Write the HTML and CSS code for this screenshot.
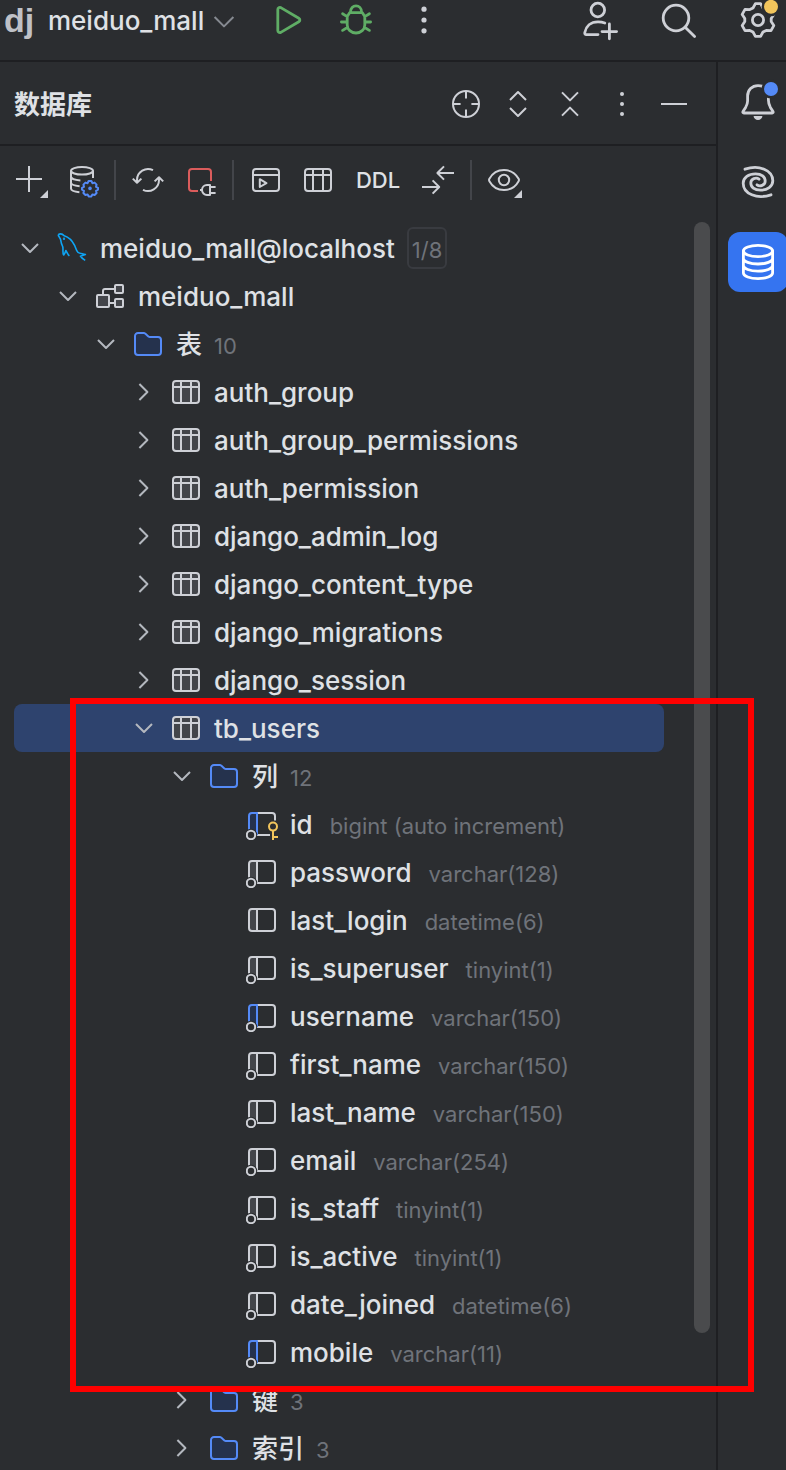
FILE: index.html
```html
<!DOCTYPE html>
<html lang="zh-CN">
<head>
    <meta charset="UTF-8">
    <meta name="viewport" content="width=device-width, initial-scale=1.0">
    <title>meiduo_mall</title>
    <link rel="stylesheet" href="styles.css">
</head>
<body>
    <!-- shared icons -->
    <svg class="sprite" aria-hidden="true">
        <symbol id="i-down" viewBox="0 0 16 16"><path d="M4 6l4 4 4-4"/></symbol>
        <symbol id="i-right" viewBox="0 0 16 16"><path d="M5.700 4l4 4-4 4"/></symbol>
        <symbol id="i-folder" viewBox="0 0 16 16">
            <path fill="#25324d" stroke="#548af7" d="M1.5 4A1.5 1.5 0 0 1 3 2.5h2.9a1 1 0 0 1 .7.3l1.6 1.4a1 1 0 0 0 .7.3H13A1.5 1.5 0 0 1 14.500 6v6a1.500 1.500 0 0 1-1.500 1.500H3A1.500 1.500 0 0 1 1.500 12z"/>
        </symbol>
        <symbol id="i-table" viewBox="0 0 16 16">
            <rect x="1.5" y="2.5" width="13" height="11" rx="1.5"/>
            <path d="M1.5 5.500h13M5.500 2.500v11M10.500 2.500v11"/>
        </symbol>
        <symbol id="i-schema" viewBox="0 0 16 16">
            <path d="M4.500 7.500V5.500a1 1 0 0 1 1-1h5M7.500 11.500h3"/>
            <rect x="1.5" y="7.500" width="6" height="6" rx=".5" fill="#43454a"/>
            <rect x="10.500" y="2.500" width="4" height="4" rx=".5" fill="#43454a"/>
            <rect x="10.500" y="9.500" width="4" height="4" rx=".5" fill="#43454a"/>
        </symbol>
        <symbol id="i-col" viewBox="0 0 16 16">
            <path fill="#43454a" stroke="none" d="M3 2.500h2.500v11H3A1.500 1.500 0 0 1 1.500 12V4z"/>
            <rect x="1.5" y="2.5" width="13" height="11" rx="1.5"/>
            <path d="M5.500 2.500v11"/>
        </symbol>
        <symbol id="i-col-nn" viewBox="0 0 16 16">
            <path fill="#43454a" stroke="none" d="M3 2.500h2.500v11H3A1.500 1.500 0 0 1 1.500 12V4z"/>
            <rect x="1.5" y="2.5" width="13" height="11" rx="1.5"/>
            <path d="M5.500 2.500v11"/>
            <circle cx="2.500" cy="13.500" r="3.100" fill="#2b2d30" stroke="none"/>
            <circle cx="2.500" cy="13.500" r="2.100"/>
        </symbol>
        <symbol id="i-col-idx" viewBox="0 0 16 16">
            <path d="M5.500 2.500H13A1.500 1.500 0 0 1 14.500 4v8a1.500 1.500 0 0 1-1.500 1.500H5.500"/>
            <path fill="#25324d" stroke="#548af7" d="M5.500 13.500v-11H3A1.500 1.500 0 0 0 1.500 4v8"/>
            <circle cx="2.500" cy="13.500" r="3.100" fill="#2b2d30" stroke="none"/>
            <circle cx="2.500" cy="13.500" r="2.100"/>
        </symbol>
        <symbol id="i-col-pk" viewBox="0 0 16 16">
            <path d="M5.500 2.500H13A1.500 1.500 0 0 1 14.500 4v2.300M5.500 13.500H12"/>
            <path fill="#25324d" stroke="#548af7" d="M5.500 13.500v-11H3A1.500 1.500 0 0 0 1.500 4v8"/>
            <circle cx="2.500" cy="13.500" r="3.100" fill="#2b2d30" stroke="none"/>
            <circle cx="2.500" cy="13.500" r="2.100"/>
            <g stroke="#f2c55c"><circle cx="13.500" cy="9.300" r="2"/><path d="M13.500 11.300V16M13.500 14.500H16"/></g>
        </symbol>
    </svg>

    <div class="app">
        <header class="topbar">
            <span class="logo">dj</span>
            <button class="project">
                meiduo_mall
                <svg class="icon muted" viewBox="0 0 16 16"><path d="M3.300 6l4.700 4.700L12.700 6"/></svg>
            </button>
            <div class="run-tools">
                <button aria-label="Run">
                    <svg class="icon-lg green" viewBox="0 0 20 20"><path d="M4.900 4.700v10.600c0 .8.800 1.200 1.500.9l9-5.300c.7-.4.7-1.400 0-1.800l-9-5.300c-.7-.3-1.500.1-1.500.9z"/></svg>
                </button>
                <button aria-label="Debug">
                    <svg class="icon-lg green" viewBox="0 0 20 20"><path d="M6.900 6.300h6.200l1.300 2v4.200a4.400 4 0 0 1-8.800 0V8.300zM7.200 6.200C7.200 1.900 12.800 1.900 12.800 6.200M5.600 8.300L3.300 6.900M14.400 8.300l2.300-1.400M5.600 11H2.700M14.400 11h2.900M5.900 13.600l-2.600 1.600M14.100 13.600l2.600 1.600"/></svg>
                </button>
                <button aria-label="More">
                    <svg class="icon-lg solid" viewBox="0 0 20 20"><circle cx="10" cy="4.600" r="1.300"/><circle cx="10" cy="10" r="1.300"/><circle cx="10" cy="15.400" r="1.300"/></svg>
                </button>
            </div>
            <div class="user-tools">
                <button aria-label="Add user">
                    <svg class="icon-lg" viewBox="0 0 20 20"><circle cx="9.900" cy="5" r="3.400"/><path d="M13.400 11.500c-1-.4-2.200-.6-3.400-.6-3.700 0-6 2.300-6.600 5.300-.1.700.1 1.100.8 1.100H10M15.700 12v7.400M12 15.800h7.300"/></svg>
                </button>
                <button aria-label="Search">
                    <svg class="icon-lg" viewBox="0 0 20 20"><circle cx="9" cy="9" r="6.400"/><path d="M13.600 13.600l4.700 4.700"/></svg>
                </button>
                <button aria-label="Settings">
                    <svg class="icon-lg" viewBox="0 0 20 20">
                        <path d="M8.700 1.800h2.600l1.200 2.200 1.600.8 2.400-.1 1.400 2.500-1.300 2v1.600l1.300 2-1.400 2.500-2.400-.1-1.600.8-1.200 2.200H8.700L7.500 16l-1.600-.8-2.400.1-1.400-2.500 1.300-2V9.200l-1.300-2 1.400-2.500 2.400.1L7.500 4z"/>
                        <circle cx="10" cy="10" r="2.800"/>
                        <circle cx="16.500" cy="3.400" r="4.700" fill="#2b2d30" stroke="none"/>
                        <circle cx="16.500" cy="3.400" r="3.500" fill="#f2c55c" stroke="none"/>
                    </svg>
                </button>
            </div>
        </header>

        <div class="workspace">
            <main class="panel">
                <div class="panel-header">
                    <h1>数据库</h1>
                    <div class="panel-actions">
                        <button aria-label="Locate"><svg class="icon" viewBox="0 0 16 16"><circle cx="8" cy="8" r="6.500"/><path d="M8 1.500V5.300M8 10.700v3.800M1.500 8h3.800M10.700 8h3.800"/></svg></button>
                        <button aria-label="Expand all"><svg class="icon" viewBox="0 0 16 16"><path d="M4 6l4-4 4 4M4 10l4 4 4-4"/></svg></button>
                        <button aria-label="Collapse all"><svg class="icon" viewBox="0 0 16 16"><path d="M4 2.200l4 4 4-4M4 13.800l4-4 4 4"/></svg></button>
                        <button aria-label="Options"><svg class="icon solid" viewBox="0 0 16 16"><circle cx="8" cy="3" r="1"/><circle cx="8" cy="8" r="1"/><circle cx="8" cy="13" r="1"/></svg></button>
                        <button aria-label="Hide"><svg class="icon" viewBox="0 0 16 16"><path d="M1.500 8h13"/></svg></button>
                    </div>
                </div>

                <div class="toolbar">
                    <div class="tool-group">
                        <button aria-label="New"><svg class="icon" viewBox="0 0 16 16"><path d="M7.500 1v13M1 7.500h13"/><path class="corner" d="M17 13v4h-4z"/></svg></button>
                        <button aria-label="Data source properties"><svg class="icon" viewBox="0 0 16 16">
                            <ellipse cx="8" cy="3.400" rx="5.500" ry="1.900"/>
                            <path d="M13.500 3.400V7M2.500 3.400v8.900c0 .9 1.800 1.600 4.200 1.800M2.500 6.300c0 1 1.900 1.800 4.700 1.900M2.500 9.300c0 .9 1.700 1.600 4.300 1.800"/>
                            <path stroke="#548af7" d="M11.300 8.500h1.400l.5 1.100 1.100-.3 1 1-.3 1.100 1 .5v.9l-1 .6.300 1.100-1 1-1.100-.3-.5 1h-1.400l-.5-1-1.100.3-1-1 .3-1.100-1-.6v-.9l1-.5-.3-1.100 1-1 1.100.3z"/>
                            <circle cx="12" cy="12.200" r=".9" fill="#548af7" stroke="none"/>
                        </svg></button>
                    </div>
                    <span class="sep"></span>
                    <div class="tool-group">
                        <button aria-label="Refresh"><svg class="icon" viewBox="0 0 16 16"><path d="M2.500 9.300V8a5.500 5.500 0 0 1 8-4.900M.4 7.300l2.100 2.100 2.200-2.100M13.500 6.700V8a5.500 5.500 0 0 1-8 4.900M11.300 8.700l2.200-2.100 2.100 2.100"/></svg></button>
                        <button aria-label="Disconnect"><svg class="icon" viewBox="0 0 16 16"><path stroke="#db5c5c" d="M13.500 8.500V4A1.500 1.500 0 0 0 12 2.500H4A1.500 1.500 0 0 0 2.500 4v8A1.500 1.500 0 0 0 4 13.500h3"/><path d="M13 10.500h-1.500a2.500 2.500 0 0 0 0 5H13zM9 13H8M13 11.500h2.800M13 14.500h2.800"/></svg></button>
                    </div>
                    <span class="sep"></span>
                    <div class="tool-group">
                        <button aria-label="Console"><svg class="icon" viewBox="0 0 16 16"><rect x="1.5" y="2.5" width="13" height="11" rx="1.5"/><path d="M1.500 5.500h13M4.900 7.600v3.900l3.300-1.950z"/></svg></button>
                        <button aria-label="Table"><svg class="icon"><use href="#i-table"/></svg></button>
                        <button class="ddl">DDL</button>
                        <button aria-label="Compare"><svg class="icon" viewBox="0 0 16 16"><path d="M16 4.500H7.700M11 1.200L7.700 4.500 11 7.800M0 11.500h8.600M5.300 8.200l3.300 3.300-3.300 3.300"/></svg></button>
                    </div>
                    <span class="sep"></span>
                    <button aria-label="View options"><svg class="icon" viewBox="0 0 16 16"><path d="M.7 8.600a1.200 1.200 0 0 1 0-1.200C2.200 4.700 4.900 3 8 3s5.800 1.700 7.300 4.400a1.200 1.200 0 0 1 0 1.200C13.800 11.300 11.100 13 8 13S2.200 11.300.7 8.600z"/><circle cx="8" cy="8" r="2.600"/><path class="corner" d="M17 13v4h-4z"/></svg></button>
                </div>

                <div class="tree-area">
                    <ul class="tree">
                        <li class="row">
                            <button class="twisty" aria-label="Collapse"><svg class="icon dim"><use href="#i-down"/></svg></button>
                            <svg class="icon mysql" viewBox="0 0 16 16"><path d="M1.100 1.300C2 .7 3.300 1 4.100 1.900 6.700 2.700 8.300 4.700 9.300 6.700c.6 1.200.8 2.800 1.700 3.500.8.500 1.900.6 3.700 1.100l-2.500.8c.5.900 1.400 1.500 2.400 2.100M1.100 1.300c.1.900.9 1.600 1.200 2.500.2 1.200.4 2.400 1 3.400.5 1.200-.2 2.900.5 4.300.7-.5.8-1.400 1.100-2.200.6.800.8 1.900 1.800 2.600"/><circle cx="4" cy="3.400" r=".2"/></svg>
                            <span class="name">meiduo_mall@localhost</span>
                            <span class="badge">1/8</span>
                        </li>
                        <li class="row level-1">
                            <button class="twisty" aria-label="Collapse"><svg class="icon dim"><use href="#i-down"/></svg></button>
                            <svg class="icon"><use href="#i-schema"/></svg>
                            <span class="name">meiduo_mall</span>
                        </li>
                        <li class="row level-2">
                            <button class="twisty" aria-label="Collapse"><svg class="icon dim"><use href="#i-down"/></svg></button>
                            <svg class="icon"><use href="#i-folder"/></svg>
                            <span class="name">表</span>
                            <span class="count">10</span>
                        </li>
                        <li class="row level-3">
                            <button class="twisty" aria-label="Expand"><svg class="icon dim"><use href="#i-right"/></svg></button>
                            <svg class="icon filled"><use href="#i-table"/></svg>
                            <span class="name">auth_group</span>
                        </li>
                        <li class="row level-3">
                            <button class="twisty" aria-label="Expand"><svg class="icon dim"><use href="#i-right"/></svg></button>
                            <svg class="icon filled"><use href="#i-table"/></svg>
                            <span class="name">auth_group_permissions</span>
                        </li>
                        <li class="row level-3">
                            <button class="twisty" aria-label="Expand"><svg class="icon dim"><use href="#i-right"/></svg></button>
                            <svg class="icon filled"><use href="#i-table"/></svg>
                            <span class="name">auth_permission</span>
                        </li>
                        <li class="row level-3">
                            <button class="twisty" aria-label="Expand"><svg class="icon dim"><use href="#i-right"/></svg></button>
                            <svg class="icon filled"><use href="#i-table"/></svg>
                            <span class="name">django_admin_log</span>
                        </li>
                        <li class="row level-3">
                            <button class="twisty" aria-label="Expand"><svg class="icon dim"><use href="#i-right"/></svg></button>
                            <svg class="icon filled"><use href="#i-table"/></svg>
                            <span class="name">django_content_type</span>
                        </li>
                        <li class="row level-3">
                            <button class="twisty" aria-label="Expand"><svg class="icon dim"><use href="#i-right"/></svg></button>
                            <svg class="icon filled"><use href="#i-table"/></svg>
                            <span class="name">django_migrations</span>
                        </li>
                        <li class="row level-3">
                            <button class="twisty" aria-label="Expand"><svg class="icon dim"><use href="#i-right"/></svg></button>
                            <svg class="icon filled"><use href="#i-table"/></svg>
                            <span class="name">django_session</span>
                        </li>
                        <li class="row level-3 selected">
                            <button class="twisty" aria-label="Collapse"><svg class="icon dim"><use href="#i-down"/></svg></button>
                            <svg class="icon filled"><use href="#i-table"/></svg>
                            <span class="name">tb_users</span>
                        </li>
                        <li class="row level-4">
                            <button class="twisty" aria-label="Collapse"><svg class="icon dim"><use href="#i-down"/></svg></button>
                            <svg class="icon"><use href="#i-folder"/></svg>
                            <span class="name">列</span>
                            <span class="count">12</span>
                        </li>
                        <li class="row column"><svg class="icon"><use href="#i-col-pk"/></svg><span class="name">id</span><span class="type">bigint (auto increment)</span></li>
                        <li class="row column"><svg class="icon"><use href="#i-col-nn"/></svg><span class="name">password</span><span class="type">varchar(128)</span></li>
                        <li class="row column"><svg class="icon"><use href="#i-col"/></svg><span class="name">last_login</span><span class="type">datetime(6)</span></li>
                        <li class="row column"><svg class="icon"><use href="#i-col-nn"/></svg><span class="name">is_superuser</span><span class="type">tinyint(1)</span></li>
                        <li class="row column"><svg class="icon"><use href="#i-col-idx"/></svg><span class="name">username</span><span class="type">varchar(150)</span></li>
                        <li class="row column"><svg class="icon"><use href="#i-col-nn"/></svg><span class="name">first_name</span><span class="type">varchar(150)</span></li>
                        <li class="row column"><svg class="icon"><use href="#i-col-nn"/></svg><span class="name">last_name</span><span class="type">varchar(150)</span></li>
                        <li class="row column"><svg class="icon"><use href="#i-col-nn"/></svg><span class="name">email</span><span class="type">varchar(254)</span></li>
                        <li class="row column"><svg class="icon"><use href="#i-col-nn"/></svg><span class="name">is_staff</span><span class="type">tinyint(1)</span></li>
                        <li class="row column"><svg class="icon"><use href="#i-col-nn"/></svg><span class="name">is_active</span><span class="type">tinyint(1)</span></li>
                        <li class="row column"><svg class="icon"><use href="#i-col-nn"/></svg><span class="name">date_joined</span><span class="type">datetime(6)</span></li>
                        <li class="row column"><svg class="icon"><use href="#i-col-idx"/></svg><span class="name">mobile</span><span class="type">varchar(11)</span></li>
                        <li class="row level-4">
                            <button class="twisty" aria-label="Expand"><svg class="icon dim"><use href="#i-right"/></svg></button>
                            <svg class="icon"><use href="#i-folder"/></svg>
                            <span class="name">键</span>
                            <span class="count">3</span>
                        </li>
                        <li class="row level-4">
                            <button class="twisty" aria-label="Expand"><svg class="icon dim"><use href="#i-right"/></svg></button>
                            <svg class="icon"><use href="#i-folder"/></svg>
                            <span class="name">索引</span>
                            <span class="count">3</span>
                        </li>
                    </ul>
                    <div class="scrollbar"><div class="thumb"></div></div>
                </div>
            </main>

            <nav class="stripe">
                <button aria-label="Notifications">
                    <svg class="icon-lg" viewBox="0 0 20 20">
                        <path d="M12.500 2.200A8 8 0 0 0 10 1.800C7 1.800 4.800 4 4.800 7v2.500c0 1.300-.5 2.300-1 3.200l-1.300 2.100c-.2.400 0 .7.400.7h14.200c.4 0 .6-.3.4-.7l-1.300-2.100c-.6-1.100-1-2.200-1-3.700V7"/>
                        <path d="M7.800 17h4.400a2.200 2 0 0 1-4.400 0z" fill="#ced0d6" stroke="none"/>
                        <circle cx="16.500" cy="3.500" r="4.700" fill="#2b2d30" stroke="none"/>
                        <circle cx="16.500" cy="3.500" r="3.500" fill="#548af7" stroke="none"/>
                    </svg>
                </button>
                <button aria-label="AI Assistant">
                    <svg class="icon-lg" viewBox="0 0 20 20">
                        <path d="M3.500 3.600C10.500 1.300 17.400 4 17.400 9.400c0 2.800-2.700 4.700-6.200 4.700-3 0-4.800-1.600-4.800-3.600 0-2.200 2.700-3 4.100-1.900"/>
                        <path d="M16.500 16.400C9.500 18.700 2.600 16 2.600 10.600c0-2.800 2.700-4.700 6.200-4.700 3 0 4.800 1.600 4.800 3.600 0 2.200-2.700 3-4.100 1.900"/>
                    </svg>
                </button>
                <button class="active" aria-label="Database">
                    <svg class="icon-lg" viewBox="0 0 20 20"><ellipse cx="10" cy="4.500" rx="7.300" ry="2.800"/><path d="M2.700 4.500v11c0 1.550 3.270 2.800 7.300 2.800s7.300-1.250 7.300-2.800v-11M2.700 8.200c0 1.550 3.270 2.800 7.300 2.800s7.300-1.250 7.300-2.800M2.700 11.800c0 1.550 3.270 2.800 7.300 2.800s7.300-1.250 7.300-2.800"/></svg>
                </button>
            </nav>
        </div>

        <div class="highlight"></div>
    </div>
</body>
</html>
```

FILE: styles.css
```css
* {
    margin: 0;
    padding: 0;
    box-sizing: border-box;
}

body {
    font-family: Inter, "Noto Sans CJK SC", sans-serif;
    font-size: 26px;
    line-height: 32px;
    background: #2b2d30;
    color: #dfe1e5;
}

button {
    display: flex;
    align-items: center;
    justify-content: center;
    background: none;
    border: none;
    color: inherit;
    font: inherit;
    cursor: pointer;
}

ul {
    list-style: none;
}

.sprite {
    position: absolute;
    width: 0;
    height: 0;
}

.icon,
.icon-lg {
    flex: none;
    display: block;
    width: 32px;
    height: 32px;
    fill: none;
    stroke: #ced0d6;
    stroke-width: 1;
    stroke-linejoin: round;
    overflow: visible;
}

.icon-lg {
    width: 40px;
    height: 40px;
    stroke-width: 1.4;
    stroke-linecap: round;
}

.dim {
    stroke: #b4b8bf;
}

.muted {
    stroke: #868a91;
}

.green {
    stroke: #5fad65;
}

.solid,
.corner {
    fill: #ced0d6;
    stroke: none;
}

.filled {
    fill: #43454a;
}

.mysql {
    stroke: #0ea5f5;
    stroke-width: .8;
}

.app {
    position: relative;
    display: flex;
    flex-direction: column;
    height: 100vh;
    overflow: hidden;
}

/* top bar */
.topbar {
    flex: none;
    display: flex;
    align-items: center;
    padding: 0 8px 20px 4px;
    border-bottom: 2px solid #1e1f22;
}

.logo {
    width: 44px;
    font-family: "Liberation Sans", sans-serif;
    font-size: 34px;
    font-weight: 700;
    line-height: 40px;
    color: #bfc1c7;
}

.project {
    gap: 4px;
    padding-top: 2px;
    font-weight: 500;
}

.run-tools {
    display: flex;
    gap: 28px;
    margin-left: auto;
}

.user-tools {
    display: flex;
    gap: 40px;
    margin-left: 134px;
}

.workspace {
    flex: 1;
    display: flex;
    min-height: 0;
}

/* database panel */
.panel {
    flex: 1;
    min-width: 0;
    display: flex;
    flex-direction: column;
    border-right: 2px solid #1e1f22;
}

.panel-header {
    flex: none;
    display: flex;
    align-items: center;
    justify-content: space-between;
    height: 84px;
    padding: 2px 26px 0 14px;
    border-bottom: 2px solid #1e1f22;
}

.panel-header h1 {
    padding-top: 2px;
    font-size: 26px;
    font-weight: 700;
}

.panel-actions {
    display: flex;
    gap: 20px;
}

.toolbar {
    flex: none;
    display: flex;
    align-items: center;
    gap: 16px;
    height: 68px;
    padding: 0 14px;
}

.tool-group {
    display: flex;
    align-items: center;
    gap: 20px;
}

.sep {
    width: 2px;
    height: 40px;
    background: #43454a;
}

.ddl {
    width: 48px;
    font-size: 22px;
    font-weight: 500;
}

/* tree */
.tree-area {
    flex: 1;
    display: flex;
    min-height: 0;
    padding: 8px 6px 0 14px;
}

.tree {
    flex: 1;
    min-width: 0;
    margin-right: 30px;
    padding-top: 2px;
}

.row {
    display: flex;
    align-items: center;
    height: 48px;
    border-radius: 8px;
    white-space: nowrap;
}

.level-1 {
    padding-left: 38px;
}

.level-2 {
    padding-left: 76px;
}

.level-3 {
    padding-left: 114px;
}

.level-4 {
    padding-left: 152px;
}

.column {
    padding-left: 232px;
}

.selected {
    background: #2e436e;
}

.twisty {
    margin-right: 10px;
}

.name {
    margin-left: 12px;
    padding-top: 2px;
    font-weight: 500;
}

.count,
.type {
    margin-left: 12px;
    padding-top: 4px;
    font-size: 22px;
    color: #6f737a;
}

.type {
    margin-left: 17px;
}

.badge {
    margin-left: 12px;
    padding: 5px 3px 1px;
    border: 2px solid #393b40;
    border-radius: 6px;
    font-size: 22px;
    color: #6f737a;
}

.scrollbar {
    width: 16px;
}

.thumb {
    height: 89%;
    border-radius: 8px;
    background: #4a4b4d;
}

/* right tool stripe */
.stripe {
    flex: none;
    display: flex;
    flex-direction: column;
    gap: 20px;
    width: 68px;
    padding: 10px 0 0 10px;
}

.stripe button {
    width: 60px;
    height: 60px;
    border-radius: 12px;
}

.stripe .active {
    background: #3574f0;
}

.stripe .active .icon-lg {
    stroke: #fff;
}

/* red frame drawn over the users table */
.highlight {
    position: absolute;
    top: 698px;
    left: 70px;
    right: 32px;
    height: 694px;
    border: 6px solid #ff0000;
    pointer-events: none;
}
```
